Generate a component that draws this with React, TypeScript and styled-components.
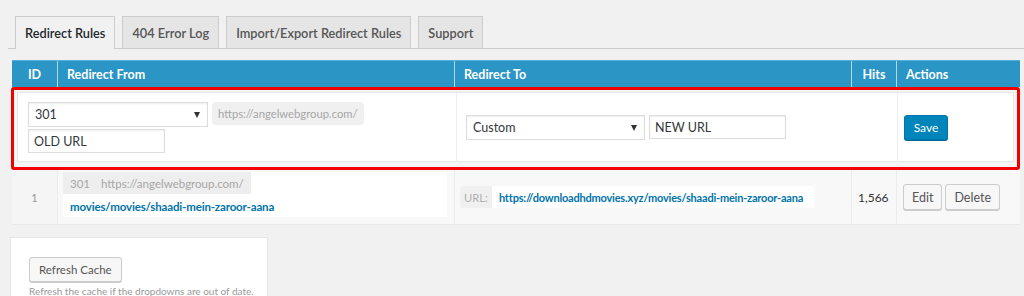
import styled, { createGlobalStyle } from "styled-components";

const GlobalStyle = createGlobalStyle`
  body {
    margin: 0;
    background: #f1f1f1;
    font-family: Lato, "Open Sans", sans-serif;
    font-size: 13px;
    color: #444;
    white-space: nowrap;
  }
`;

const COLS = "45px 397px 397px 45px 124px";

function App() {
  return (
    <StPage>
      <GlobalStyle />
      <StTabs>
        <StTab $active>Redirect Rules</StTab>
        <StTab>404 Error Log</StTab>
        <StTab>Import/Export Redirect Rules</StTab>
        <StTab>Support</StTab>
      </StTabs>

      <StTable>
        <StHeader>
          <StHeadCell $center>ID</StHeadCell>
          <StHeadCell>Redirect From</StHeadCell>
          <StHeadCell>Redirect To</StHeadCell>
          <StHeadCell $center>Hits</StHeadCell>
          <StHeadCell>Actions</StHeadCell>
        </StHeader>

        <StEditRow>
          <StEditInner>
            <StEditCell>
              <StLine>
                <StSelect $width={180}>
                  <span>301</span>
                  <StArrow />
                </StSelect>
                <StPrefix>https://angelwebgroup.com/</StPrefix>
              </StLine>
              <StInput $width={137} value="OLD URL" readOnly />
            </StEditCell>
            <StEditCell $center>
              <StLine>
                <StSelect $width={179}>
                  <span>Custom</span>
                  <StArrow />
                </StSelect>
                <StInput $width={137} value="NEW URL" readOnly />
              </StLine>
            </StEditCell>
            <StEditCell $center $pad={6}>
              <StSaveBtn>Save</StSaveBtn>
            </StEditCell>
          </StEditInner>
        </StEditRow>

        <StDataRow>
          <StIdCell>1</StIdCell>
          <StFromCell>
            <StFromBox>
              <StFromMeta>
                <span>301</span>
                <span>https://angelwebgroup.com/</span>
              </StFromMeta>
              <StFromLink>movies/movies/shaadi-mein-zaroor-aana</StFromLink>
            </StFromBox>
          </StFromCell>
          <StToCell>
            <StUrlGroup>
              <StUrlLabel>URL:</StUrlLabel>
              <StUrlField>
                <StToLink>https://downloadhdmovies.xyz/movies/shaadi-mein-zaroor-aana</StToLink>
              </StUrlField>
            </StUrlGroup>
          </StToCell>
          <StHitsCell>1,566</StHitsCell>
          <StActionsCell>
            <StButton>Edit</StButton>
            <StButton>Delete</StButton>
          </StActionsCell>
        </StDataRow>
      </StTable>

      <StPanel>
        <StButton $tall>Refresh Cache</StButton>
        <StHelp>Refresh the cache if the dropdowns are out of date.</StHelp>
      </StPanel>
    </StPage>
  );
}

export default App;

const StPage = styled.div`
  padding-top: 16px;
`;

const StTabs = styled.div`
  display: flex;
  align-items: flex-end;
  gap: 7px;
  height: 32px;
  margin-left: 8px;
  padding-left: 7px;
  border-bottom: 1px solid #ccc;
`;

const StTab = styled.div<{ $active?: boolean }>`
  box-sizing: border-box;
  height: ${(p) => (p.$active ? "33px" : "32px")};
  margin-bottom: ${(p) => (p.$active ? "-1px" : "0")};
  padding: 0 9px ${(p) => (p.$active ? "1px" : "0")};
  display: flex;
  align-items: center;
  border: 1px solid #ccc;
  border-bottom: none;
  background: ${(p) => (p.$active ? "#f1f1f1" : "#e5e5e5")};
  color: ${(p) => (p.$active ? "#23282d" : "#555")};
  font-size: 12.75px;
  font-weight: 600;
`;

const StTable = styled.div`
  margin: 11px 0 0 12px;
  width: 1008px;
`;

const StHeader = styled.div`
  display: grid;
  grid-template-columns: ${COLS};
  height: 27px;
  background: #2b95c6;
  border-top: 1px solid #59addb;
  box-sizing: border-box;
`;

const StHeadCell = styled.div<{ $center?: boolean }>`
  display: flex;
  align-items: center;
  justify-content: ${(p) => (p.$center ? "center" : "flex-start")};
  padding-left: ${(p) => (p.$center ? "0" : "9px")};
  color: #fff;
  font-weight: 700;
  font-size: 12.5px;
  & + & {
    border-left: 1px solid #b5d9ec;
  }
`;

const StEditRow = styled.div`
  margin-left: -1px;
  border: 3px solid #f20000;
  border-radius: 3px;
  padding: 2px 3px 5px 3px;
  background: #f4f4f4;
`;

const StEditInner = styled.div`
  display: grid;
  grid-template-columns: 438px 441px 1fr;
  background: #fff;
  border: 1px solid #e6e6e6;
  height: 70px;
  box-sizing: border-box;
`;

const StEditCell = styled.div<{ $center?: boolean; $pad?: number }>`
  display: flex;
  flex-direction: column;
  justify-content: ${(p) => (p.$center ? "center" : "flex-start")};
  gap: 2px;
  padding: ${(p) => (p.$center ? `0 ${p.$pad ?? 9}px` : "9px 10px")};
  & + & {
    border-left: 1px solid #efefef;
  }
`;

const StLine = styled.div`
  display: flex;
  align-items: flex-start;
  gap: 4px;
`;

const StSelect = styled.div<{ $width: number }>`
  box-sizing: border-box;
  width: ${(p) => p.$width}px;
  height: 25px;
  padding: 0 7px 0 6px;
  display: flex;
  align-items: center;
  justify-content: space-between;
  border: 1px solid #ddd;
  background: #fff;
  box-shadow: inset 0 1px 2px rgba(0, 0, 0, 0.07);
  color: #32373c;
  font-size: 12.5px;
`;

const StArrow = styled.span`
  width: 0;
  height: 0;
  border-left: 3.5px solid transparent;
  border-right: 3.5px solid transparent;
  border-top: 6px solid #333;
`;

const StPrefix = styled.div`
  height: 23px;
  padding: 0 6px;
  display: flex;
  align-items: center;
  background: #f0f0f0;
  border-radius: 4px;
  color: #a6a6a6;
  font-size: 11.25px;
`;

const StInput = styled.input<{ $width: number }>`
  box-sizing: border-box;
  width: ${(p) => p.$width}px;
  height: 24px;
  padding: 0 5px;
  border: 1px solid #ddd;
  box-shadow: inset 0 1px 2px rgba(0, 0, 0, 0.07);
  font-family: inherit;
  font-size: 12.5px;
  color: #32373c;
  outline: none;
`;

const StSaveBtn = styled.button`
  width: 44px;
  height: 25px;
  padding: 0;
  border: 1px solid #0073aa;
  border-radius: 3px;
  background: #0085ba;
  box-shadow: 0 1px 0 #006799;
  color: #fff;
  font-family: inherit;
  font-size: 12px;
`;

const StDataRow = styled.div`
  display: grid;
  grid-template-columns: ${COLS};
  height: 54px;
  background: #f8f8f8;
  border-bottom: 1px solid #e8e8e8;
  & > * + * {
    border-left: 1px solid #ececec;
  }
`;

const StIdCell = styled.div`
  display: flex;
  align-items: center;
  justify-content: center;
  color: #999;
  font-size: 11px;
  background: #f5f5f5;
`;

const StFromCell = styled.div`
  padding: 2px 7px 7px 5px;
`;

const StFromBox = styled.div`
  height: 100%;
  background: #fff;
  display: flex;
  flex-direction: column;
  align-items: flex-start;
`;

const StFromMeta = styled.div`
  height: 22px;
  padding: 0 7px;
  display: flex;
  align-items: center;
  gap: 11px;
  background: #eeeeee;
  color: #a6a6a6;
  font-size: 11.5px;
`;

const StLink = styled.span`
  color: #0073aa;
  font-weight: 700;
  font-size: 11.5px;
  letter-spacing: -0.15px;
`;

const StFromLink = styled(StLink)`
  padding: 6px 7px 0;
`;

const StToLink = styled(StLink)`
  font-size: 11px;
  letter-spacing: -0.2px;
`;

const StToCell = styled.div`
  display: flex;
  align-items: center;
  padding-left: 5px;
`;

const StUrlGroup = styled.div`
  display: flex;
  height: 22px;
  border-radius: 3px;
  overflow: hidden;
`;

const StUrlLabel = styled.div`
  display: flex;
  align-items: center;
  padding: 0 4px;
  background: #f0f0f0;
  color: #b0b0b0;
  font-size: 11.25px;
`;

const StUrlField = styled.div`
  display: flex;
  align-items: center;
  padding: 0 12px 0 7px;
  background: #fff;
`;

const StHitsCell = styled.div`
  display: flex;
  align-items: center;
  padding-left: 6px;
  color: #333;
  font-size: 12px;
`;

const StActionsCell = styled.div`
  display: flex;
  align-items: center;
  gap: 3px;
  padding-left: 6px;
`;

const StButton = styled.button<{ $tall?: boolean }>`
  height: ${(p) => (p.$tall ? "25px" : "26px")};
  padding: 0 ${(p) => (p.$tall ? "9px" : "8px")};
  border: 1px solid #ccc;
  border-radius: 3px;
  background: #f7f7f7;
  box-shadow: 0 1px 0 #ccc;
  color: #555;
  font-family: inherit;
  font-size: ${(p) => (p.$tall ? "11.5px" : "12.5px")};
`;

const StPanel = styled.div`
  margin: 12px 0 0 10px;
  width: 258px;
  box-sizing: border-box;
  padding: 19px 18px;
  background: #fff;
  border: 1px solid #e5e5e5;
  display: flex;
  flex-direction: column;
  align-items: flex-start;
  gap: 3px;
`;

const StHelp = styled.div`
  color: #999;
  font-size: 10px;
`;
